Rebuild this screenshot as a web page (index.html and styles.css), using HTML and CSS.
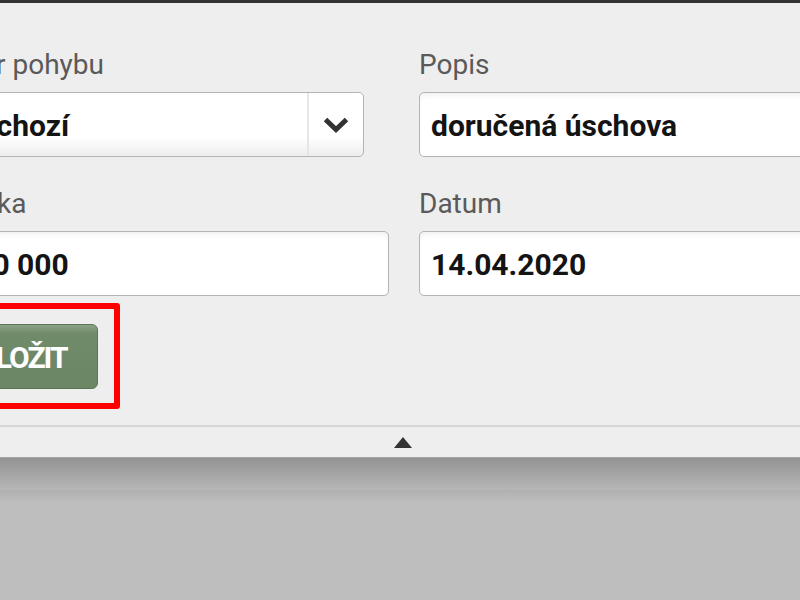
FILE: index.html
```html
<!DOCTYPE html>
<html lang="cs">
<head>
<meta charset="utf-8">
<title>Pohyb</title>
<link rel="stylesheet" href="styles.css">
</head>
<body>
<div class="topbar"></div>
<section class="panel">
  <form class="form">
    <div class="grid">
      <div class="field col-a">
        <label class="label">Směr pohybu</label>
        <div class="select">
          <span class="select-value">Příchozí</span>
          <span class="select-arrow">
            <svg width="26" height="16" viewBox="0 0 26 16"><polyline points="2.5,2.5 13,12.5 23.5,2.5" fill="none" stroke="#333" stroke-width="5"/></svg>
          </span>
        </div>
      </div>
      <div class="field">
        <label class="label">Popis</label>
        <input class="input" type="text" value="doručená úschova">
      </div>
      <div class="field col-a">
        <label class="label">Částka</label>
        <input class="input" type="text" value="100 000">
      </div>
      <div class="field">
        <label class="label">Datum</label>
        <input class="input" type="text" value="14.04.2020">
      </div>
    </div>
    <div class="actions">
      <div class="btn-wrap">
        <button type="button" class="btn">ULOŽIT</button>
        <span class="highlight"></span>
      </div>
    </div>
  </form>
  <div class="footer"><span class="caret"></span></div>
</section>
<div class="shade"></div>
<div class="ground"></div>
</body>
</html>
```
FILE: styles.css
```css
html, body {
  margin: 0;
  padding: 0;
}
body {
  background: #bebebe;
  font-family: Roboto, "Liberation Sans", sans-serif;
  overflow: hidden;
  width: 800px;
  height: 600px;
}
.topbar {
  height: 3px;
  background: #333333;
}
.panel {
  background: #eeeeee;
  border-bottom: 1px solid #a3a3a3;
  height: 454px;
  display: flex;
  flex-direction: column;
}
.form {
  margin-left: -60px;
  padding-top: 45px;
  flex: 1;
}
.grid {
  display: grid;
  grid-template-columns: 449px 443px;
  column-gap: 30px;
  row-gap: 29.5px;
}
.field {
  display: flex;
  flex-direction: column;
}
.label {
  font-size: 28px;
  font-weight: 400;
  line-height: 34px;
  color: #5a5a5a;
  margin-bottom: 10px;
}
.input {
  box-sizing: border-box;
  width: 100%;
  height: 65px;
  margin: 0;
  border: 1px solid #b4b4b4;
  border-radius: 5px;
  padding: 2px 11px 0;
  background: #ffffff;
  box-shadow: inset 0 5px 6px -3px rgba(0, 0, 0, 0.07);
  font-family: Roboto, "Liberation Sans", sans-serif;
  font-size: 30px;
  font-weight: 700;
  color: #141414;
  outline: none;
}
.col-a .input,
.col-a .select-value {
  padding-left: 17px;
}
.select {
  box-sizing: border-box;
  width: calc(100% - 25px);
  height: 65px;
  border: 1px solid #b4b4b4;
  border-radius: 5px;
  background: linear-gradient(#ffffff 0%, #ffffff 70%, #ededed 100%);
  display: flex;
  align-items: stretch;
}
.select-value {
  flex: 1;
  display: flex;
  align-items: center;
  padding: 2px 11px 0;
  font-size: 30px;
  font-weight: 700;
  color: #141414;
}
.select-arrow {
  width: 54px;
  border-left: 2px solid #e6e6e6;
  display: flex;
  align-items: center;
  justify-content: center;
}
.actions {
  margin-top: 28.5px;
  display: flex;
}
.btn-wrap {
  position: relative;
}
.btn {
  height: 65px;
  margin: 0;
  padding: 2px 30px 0 37px;
  border: 1px solid #5b7655;
  border-radius: 6px;
  background: linear-gradient(#8ca385 0%, #708b69 14%, #6b8664 100%);
  color: #ffffff;
  font-family: Roboto, "Liberation Sans", sans-serif;
  font-size: 30px;
  font-weight: 700;
  letter-spacing: -2px;
  display: block;
}
.highlight {
  position: absolute;
  top: -21.5px;
  bottom: -19.5px;
  left: -22px;
  right: -22px;
  border: 6.5px solid #ff0000;
  border-radius: 3px;
  pointer-events: none;
}
.footer {
  height: 30px;
  border-top: 2px solid #d6d6d6;
  display: flex;
  align-items: center;
  justify-content: center;
}
.caret {
  width: 0;
  height: 0;
  border-left: 9.5px solid transparent;
  border-right: 9.5px solid transparent;
  border-bottom: 11px solid #333333;
  margin-left: 6px;
}
.shade {
  height: 32px;
  background: linear-gradient(#939393, #b7b7b7);
}
.ground {
  height: 110px;
  background: linear-gradient(#b0b0b0 0px, #bebebe 12px, #bebebe 100%);
}
```
